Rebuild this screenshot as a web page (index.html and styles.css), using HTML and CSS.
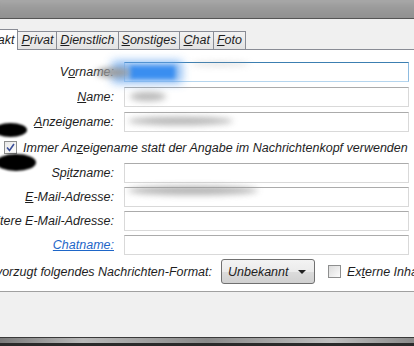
FILE: index.html
```html
<!DOCTYPE html>
<html lang="de">
  <head>
    <meta charset="UTF-8" />
    <title>Kontakt bearbeiten</title>
    <link rel="stylesheet" href="styles.css">
  </head>
  <body>
    <div class="titlebar"><div class="titlebar-blur"></div></div>

    <div class="tabbar">
      <div class="tabs">
        <div class="tab selected">Kontakt</div>
        <div class="tab"><u>P</u>rivat</div>
        <div class="tab"><u>D</u>ienstlich</div>
        <div class="tab"><u>S</u>onstiges</div>
        <div class="tab"><u>C</u>hat</div>
        <div class="tab"><u>F</u>oto</div>
      </div>
    </div>

    <div class="panel">
      <div class="row">
        <div class="label">V<u>o</u>rname:</div>
        <div class="field focused"></div>
      </div>
      <div class="row">
        <div class="label"><u>N</u>ame:</div>
        <div class="field"></div>
      </div>
      <div class="row">
        <div class="label"><u>A</u>nzeigename:</div>
        <div class="field"></div>
      </div>
      <div class="check-row">
        <span class="checkbox checked">
          <svg width="9" height="9" viewBox="0 0 9 9"><path d="M1 4.5 L3.5 7.5 L8 1" fill="none" stroke="#3b4f9a" stroke-width="1.6"/></svg>
        </span>
        <span>Immer An<u>z</u>eigename statt der Angabe im Nachrichtenkopf verwenden</span>
      </div>
      <div class="row tight">
        <div class="label">Sp<u>i</u>tzname:</div>
        <div class="field"></div>
      </div>
      <div class="row tight">
        <div class="label"><u>E</u>-Mail-Adresse:</div>
        <div class="field"></div>
      </div>
      <div class="row tight">
        <div class="label">Weitere E-Mail-Adresse:</div>
        <div class="field"></div>
      </div>
      <div class="row tight">
        <div class="label"><a class="link" href="#">Chatname:</a></div>
        <div class="field"></div>
      </div>
      <div class="format-row">
        <div class="format-label">Bevorzugt folgendes Nachrichten-Format:</div>
        <div class="dropdown">
          <span>Unbekannt</span>
          <svg width="8" height="4" viewBox="0 0 8 4"><path d="M0 0 H8 L4 4 Z" fill="#222"/></svg>
        </div>
        <span class="checkbox"></span>
        <span class="external">Ex<u>t</u>erne Inhalte erlauben</span>
      </div>
    </div>

    <div class="footer"></div>
    <div class="frame-bottom"></div>

    <!-- blurred / blacked out personal data -->
    <div class="smudge blue"></div>
    <div class="smudge blue-core"></div>
    <div class="smudge grey g1"></div>
    <div class="smudge grey g2"></div>
    <div class="smudge grey g3"></div>
    <div class="smudge grey g4"></div>
    <div class="smudge grey g5"></div>
    <div class="smudge black b1"></div>
    <div class="smudge black b2"></div>
  </body>
</html>
```

FILE: styles.css
```css
* {
  margin: 0;
  padding: 0;
  box-sizing: border-box;
}

body {
  width: 414px;
  height: 346px;
  overflow: hidden;
  position: relative;
  font-family: "Liberation Sans", Arial, sans-serif;
  font-size: 12.5px;
  font-style: italic;
  color: #1e1e1e;
  background: #f0f0f0;
}

u {
  text-decoration: underline;
  text-underline-offset: 1px;
}

.titlebar {
  height: 19px;
  overflow: hidden;
  background: #959595;
  border-bottom: 1px solid #555;
  position: relative;
}

.titlebar-blur {
  position: absolute;
  inset: -6px;
  background: linear-gradient(180deg, #b4b4b4 0%, #9a9a9a 45%, #8c8c8c 100%);
  filter: blur(3px);
}

.tabbar {
  height: 30px;
  display: flex;
  align-items: flex-end;
  background: #f0f0f0;
}

.tabs {
  display: flex;
  align-items: flex-end;
  margin-left: -32px;
}

.tab {
  height: 18px;
  padding: 0 3px;
  margin-left: -1px;
  line-height: 17px;
  border: 1px solid #898c95;
  border-bottom: none;
  background: linear-gradient(180deg, #f2f2f2, #e3e3e3);
}

.tab.selected {
  height: 21px;
  padding: 2px 3px 0 4px;
  background: #fff;
  margin-bottom: -1px;
  position: relative;
  z-index: 1;
}

.panel {
  height: 243px;
  background: #fff;
  border-top: 1px solid #898c95;
  border-bottom: 1px solid #a0a0a0;
  padding: 12px 5px 0 0;
}

.row {
  display: flex;
  height: 20px;
  margin-bottom: 5px;
}

.row.tight {
  margin-bottom: 4px;
}

.label {
  width: 114px;
  flex-shrink: 0;
  display: flex;
  justify-content: flex-end;
  align-items: center;
  white-space: nowrap;
  margin-right: 10px;
}

.link {
  color: #1e66c8;
}

.field {
  flex: 1;
  border: 1px solid #d9d9d9;
  border-top-color: #ababab;
  background: #fff;
}

.field.focused {
  border-color: #b5d5ee;
  border-top-color: #3c7fb1;
  border-right-color: #8dbbe0;
}

.check-row {
  height: 21px;
  display: flex;
  align-items: center;
  padding-left: 4px;
  margin-bottom: 5px;
  white-space: nowrap;
}

.checkbox {
  width: 13px;
  height: 13px;
  flex-shrink: 0;
  border: 1px solid #8e8f8f;
  background: linear-gradient(135deg, #dcdcdc, #fcfcfc);
  display: inline-flex;
  align-items: center;
  justify-content: center;
  margin-right: 6px;
}

.checkbox.checked {
  background: linear-gradient(135deg, #e8e8e8, #fdfdfd);
}

.format-row {
  display: flex;
  align-items: center;
  height: 25px;
  white-space: nowrap;
}

.format-label {
  width: 212px;
  flex-shrink: 0;
  display: flex;
  justify-content: flex-end;
  margin-right: 9px;
}

.dropdown {
  width: 94px;
  height: 25px;
  flex-shrink: 0;
  display: flex;
  align-items: center;
  justify-content: space-between;
  padding: 0 8px 0 6px;
  border: 1px solid #707070;
  border-radius: 3px;
  background: linear-gradient(180deg, #f3f3f3 0%, #ebebeb 50%, #dcdcdc 51%, #d0d0d0 100%);
  color: #222;
  margin-right: 13px;
}

.footer {
  height: 45px;
  background: #f0f0f0;
}

.frame-bottom {
  height: 9px;
  border-top: 1px solid #3a3a3a;
  background: linear-gradient(90deg, #7a7a7a, #b9b9b9 20%, #8a8a8a 50%, #c0c0c0 80%, #8a8a8a);
  border-bottom: 3px solid #2a2a2a;
}

/* redaction smudges */
.smudge {
  position: absolute;
  pointer-events: none;
}

.blue {
  left: 112px;
  top: 61px;
  width: 70px;
  height: 22px;
  background: #6aa8f0;
  filter: blur(5px);
  opacity: 0.8;
}

.blue-core {
  left: 130px;
  top: 66px;
  width: 45px;
  height: 13px;
  background: #3a8ef0;
  filter: blur(2px);
}

.grey {
  background: #9a9a9a;
  border-radius: 50%;
  filter: blur(3px);
}

.g1 { left: 96px; top: 68px; width: 34px; height: 9px; }
.g2 { left: 130px; top: 92px; width: 36px; height: 9px; opacity: 0.7; }
.g3 { left: 128px; top: 117px; width: 105px; height: 8px; opacity: 0.75; }
.g4 { left: 128px; top: 186px; width: 130px; height: 9px; opacity: 0.75; }
.g5 { left: 190px; top: 62px; width: 60px; height: 4px; opacity: 0.35; }

.black {
  background: #000;
  border-radius: 50%;
  filter: blur(1px);
}

.b1 { left: -6px; top: 123px; width: 33px; height: 14px; }
.b2 { left: -4px; top: 154px; width: 40px; height: 17px; }
```
